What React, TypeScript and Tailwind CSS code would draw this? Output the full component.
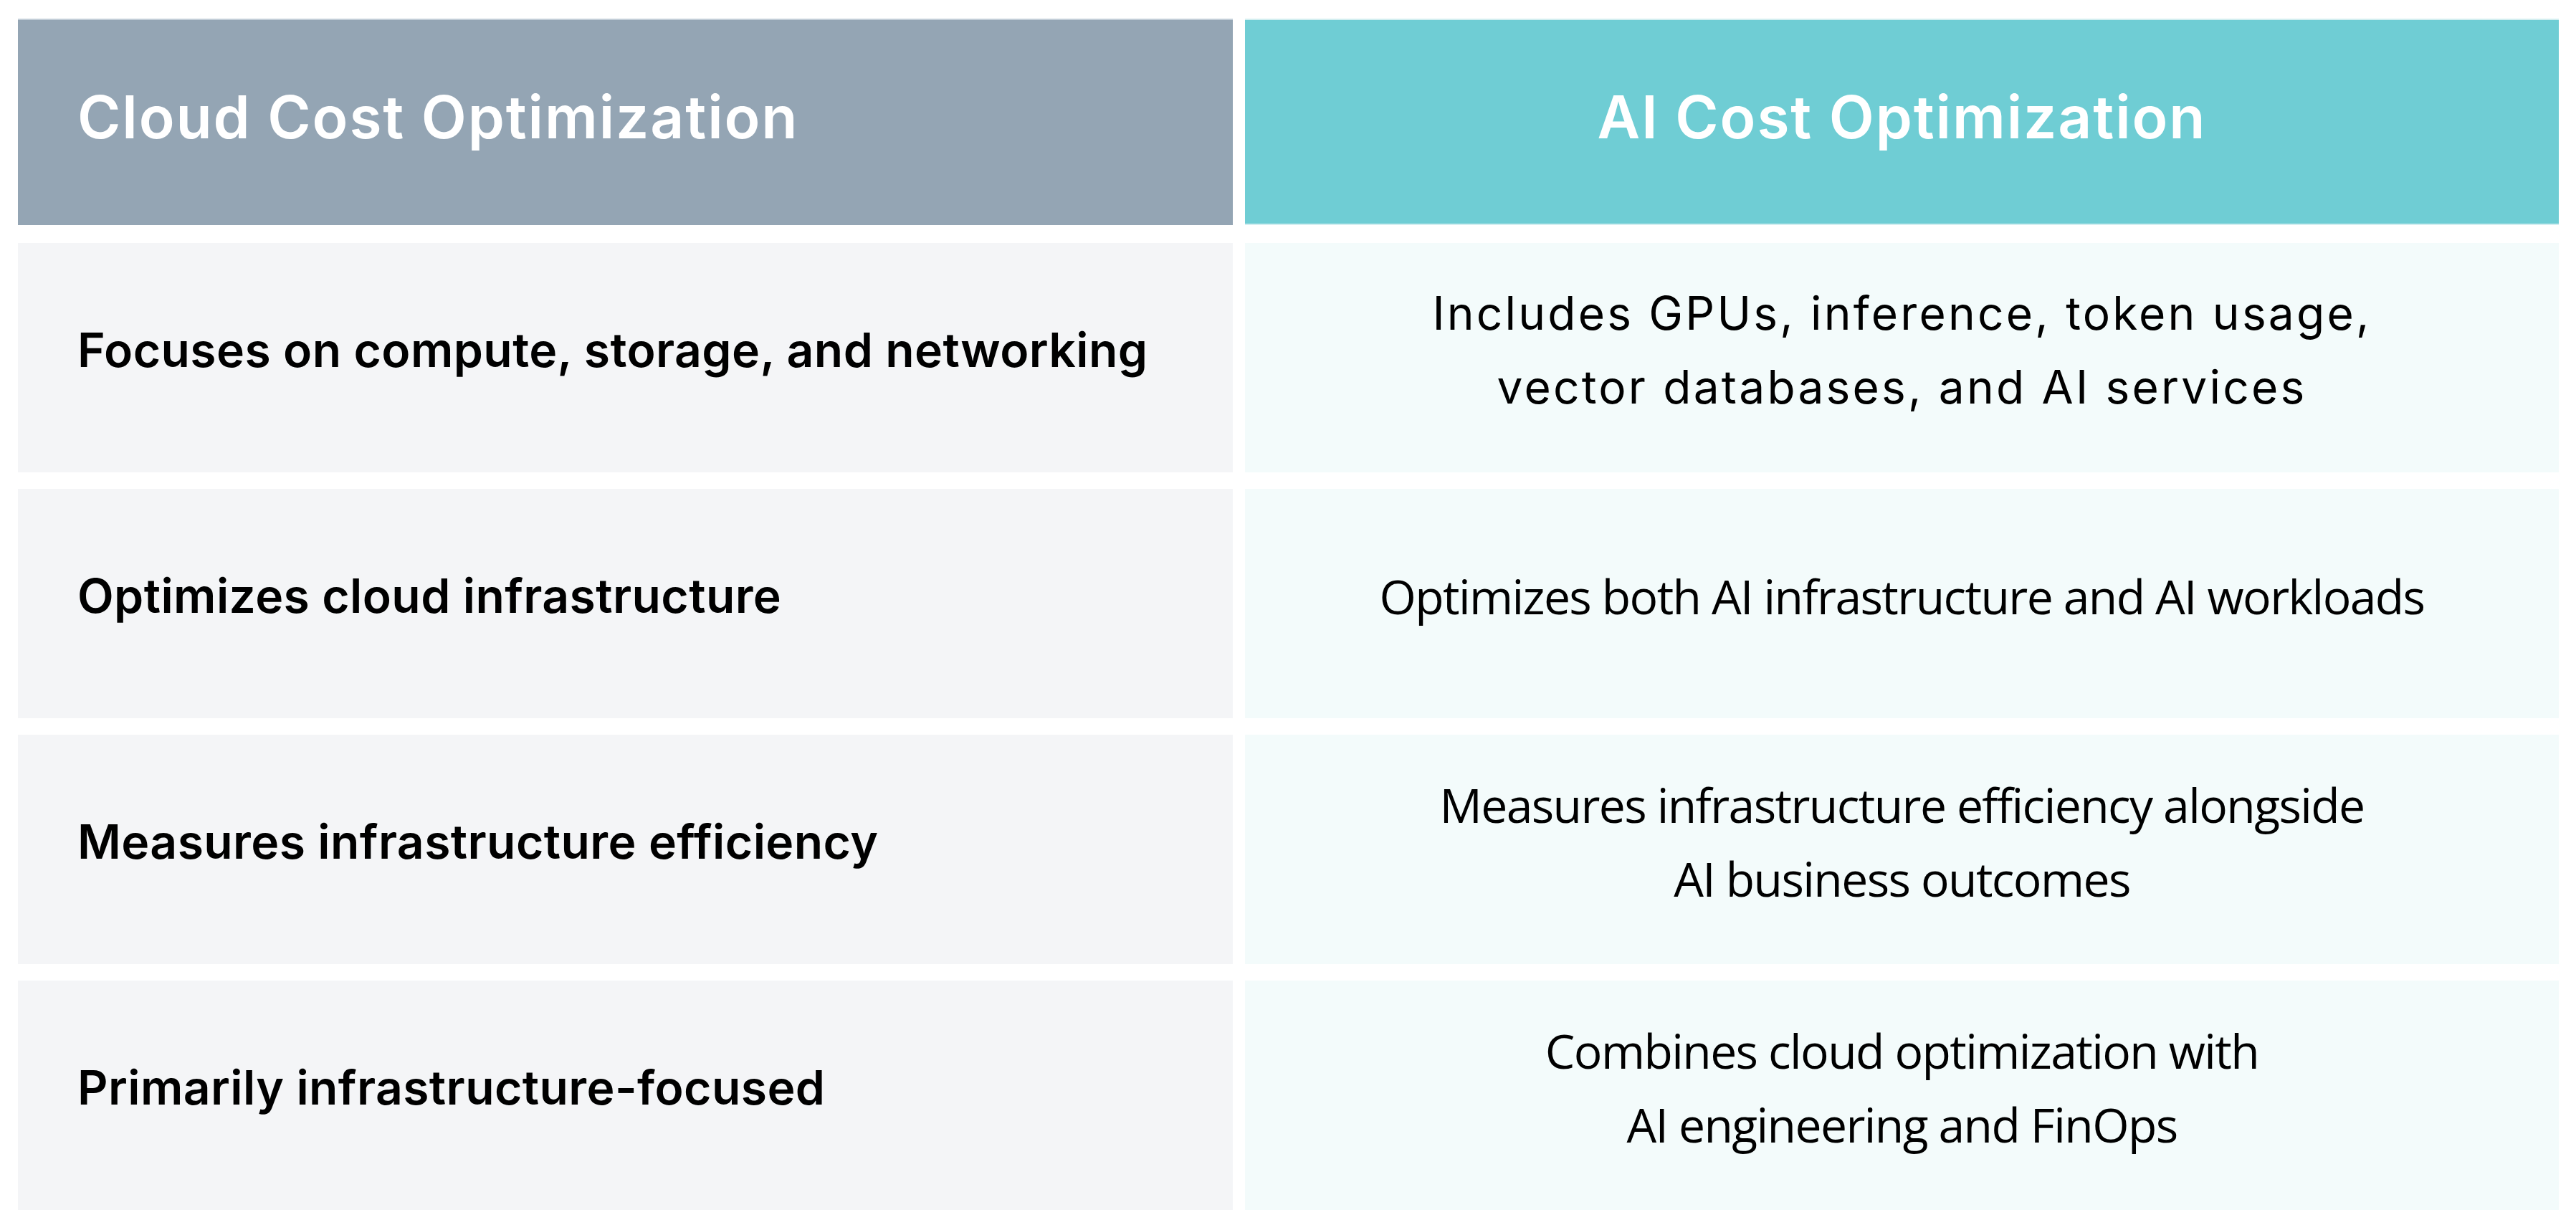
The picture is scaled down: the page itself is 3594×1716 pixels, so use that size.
const rows = [
  {
    left: 'Focuses on compute, storage, and networking',
    right: ['Includes GPUs, inference, token usage,', 'vector databases, and AI services'],
    geo: true,
  },
  { left: 'Optimizes cloud infrastructure', right: ['Optimizes both AI infrastructure and AI workloads'] },
  { left: 'Measures infrastructure efficiency', right: ['Measures infrastructure efficiency alongside', 'AI business outcomes'] },
  { left: 'Primarily infrastructure-focused', right: ['Combines cloud optimization with', 'AI engineering and FinOps'] },
]

export default function App() {
  return (
    <div className="w-[3594px] h-[1716px] bg-white pt-[26px] pl-[25px] font-['Inter',sans-serif]">
      {/* Header */}
      <div className="flex gap-[17px]">
        <div className="w-[1695px] h-[288px] bg-[#94a5b4] border-t-2 border-[#c3ced8] flex items-center pl-[83px] pb-[16px]">
          <span className="text-white text-[82px] font-semibold tracking-[1.9px]">Cloud Cost Optimization</span>
        </div>
        <div className="w-[1833px] h-[288px] bg-[#6fcdd4] border-t-2 border-b-2 border-[#d3eef0] flex items-center justify-center pb-[14px]">
          <span className="text-white text-[82px] font-semibold tracking-[1.9px]">AI Cost Optimization</span>
        </div>
      </div>

      {/* Rows */}
      <div className="mt-[25px] flex flex-col gap-[23px]">
        {rows.map((r) => (
          <div key={r.left} className="flex gap-[17px]">
            <div className="w-[1695px] h-[320px] bg-[#f4f5f7] flex items-center pl-[83px] pb-[22px]">
              <span className="text-black text-[66px] font-semibold tracking-[0.4px]">{r.left}</span>
            </div>
            <div className="w-[1833px] h-[320px] bg-[#f3fbfb] flex flex-col items-center justify-center pb-[22px] text-center text-black">
              {r.right.map((line) =>
                r.geo ? (
                  <p key={line} className="text-[64px] leading-[103px] tracking-[3.2px]">{line}</p>
                ) : (
                  <p key={line} className="text-[66px] leading-[103px] font-['Open_Sans',sans-serif] tracking-[-1.6px]">{line}</p>
                )
              )}
            </div>
          </div>
        ))}
      </div>
    </div>
  )
}
